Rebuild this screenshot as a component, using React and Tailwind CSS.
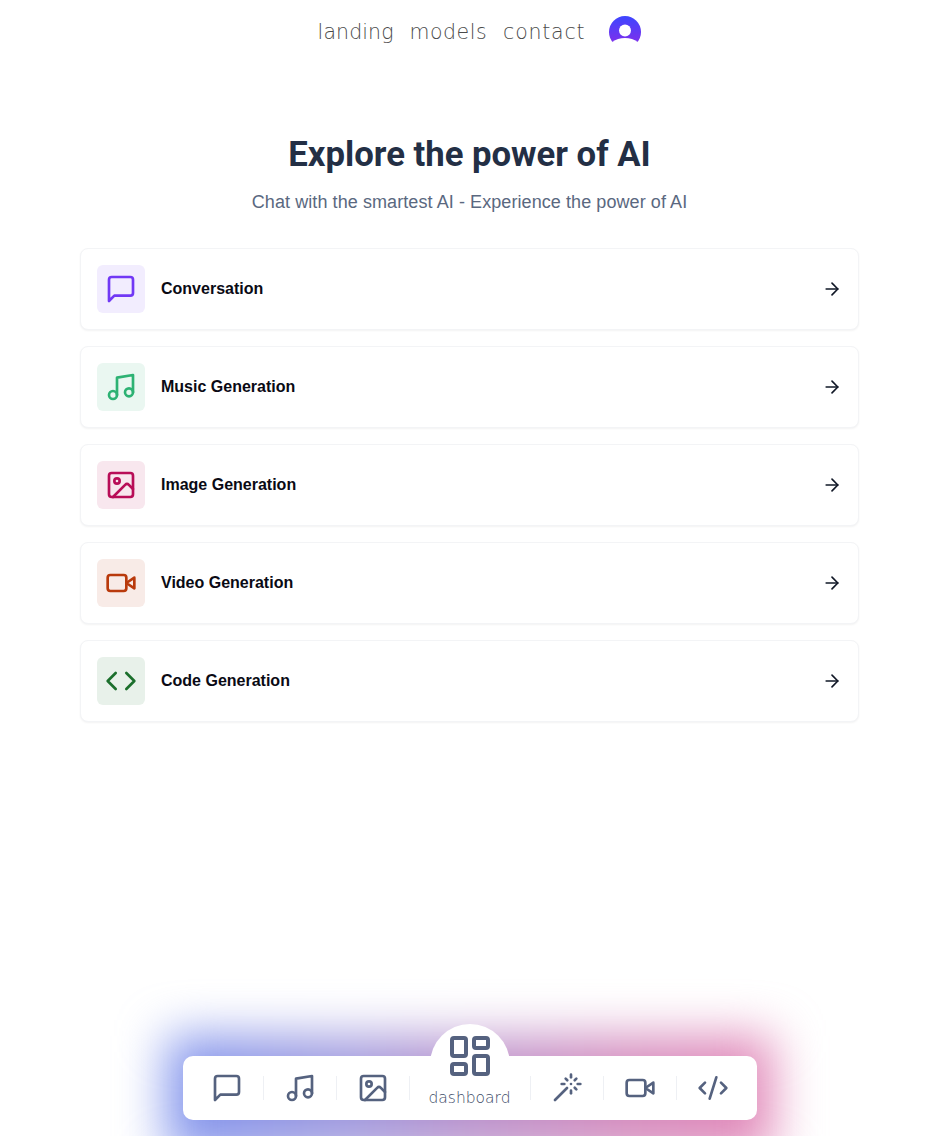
const P = ({ size = 32, sw = 2, className = "", children }) => (
  <svg width={size} height={size} viewBox="0 0 24 24" fill="none" stroke="currentColor" strokeWidth={sw} strokeLinecap="round" strokeLinejoin="round" className={className}>
    {children}
  </svg>
);

const Chat = (p) => <P {...p}><path d="M21 15a2 2 0 0 1-2 2H7l-4 4V5a2 2 0 0 1 2-2h14a2 2 0 0 1 2 2z" /></P>;
const Music = (p) => <P {...p}><path d="M9 18V5l12-2v13" /><circle cx="6" cy="18" r="3" /><circle cx="18" cy="16" r="3" /></P>;
const ImageI = (p) => <P {...p}><rect x="3" y="3" width="18" height="18" rx="2" /><circle cx="9" cy="9" r="2" /><path d="m21 15-3.086-3.086a2 2 0 0 0-2.828 0L6 21" /></P>;
const Video = (p) => <P {...p}><path d="m22 8-6 4 6 4V8Z" /><rect x="2" y="6" width="14" height="12" rx="2" /></P>;
const Code = (p) => <P {...p}><path d="m16 18 6-6-6-6" /><path d="m8 6-6 6 6 6" /></P>;
const CodeSlash = (p) => <P {...p}><path d="m18 16 4-4-4-4" /><path d="m6 8-4 4 4 4" /><path d="m14.5 4-5 16" /></P>;
const Wand = (p) => <P {...p}><path d="M15 4V2" /><path d="M15 16v-2" /><path d="M8 9h2" /><path d="M20 9h2" /><path d="M17.8 11.8 19 13" /><path d="M15 9h0" /><path d="M17.8 6.2 19 5" /><path d="m3 21 9-9" /><path d="M12.2 6.2 11 5" /></P>;
const Dash = (p) => <P {...p}><rect x="3" y="3" width="7" height="9" rx="1" /><rect x="14" y="3" width="7" height="5" rx="1" /><rect x="14" y="12" width="7" height="9" rx="1" /><rect x="3" y="16" width="7" height="5" rx="1" /></P>;

const cards = [
  { label: "Conversation", Icon: Chat, color: "text-[#7138f5]", bg: "bg-[#f2edfe]" },
  { label: "Music Generation", Icon: Music, color: "text-[#2db273]", bg: "bg-[#eaf7f1]" },
  { label: "Image Generation", Icon: ImageI, color: "text-[#b80d57]", bg: "bg-[#f8e7ee]" },
  { label: "Video Generation", Icon: Video, color: "text-[#b93a0c]", bg: "bg-[#f8ebe7]" },
  { label: "Code Generation", Icon: Code, color: "text-[#1b6f2c]", bg: "bg-[#e8f1ea]" },
];

const Divider = () => <div className="h-6 w-px bg-[#eef0f4]" />;
const Slot = ({ Icon }) => (
  <div className="flex w-[72px] items-center justify-center text-[#55627f]">
    <Icon size={32} />
  </div>
);

export default function App() {
  return (
    <div className="relative flex h-[1136px] flex-col overflow-hidden bg-white font-['Liberation_Sans',sans-serif]">
      <nav className="flex h-16 items-center justify-center gap-[16px] pl-5 text-[#4a4a4a]">
        <a className="font-['DejaVu_Sans',sans-serif] text-[20.5px] font-extralight tracking-[0.1px]">landing</a>
        <a className="font-['DejaVu_Sans',sans-serif] text-[20.5px] font-extralight tracking-[0.5px]">models</a>
        <a className="font-['DejaVu_Sans',sans-serif] text-[20.5px] font-extralight tracking-[0.8px]">contact</a>
        <svg width="32" height="32" viewBox="0 0 32 32" className="ml-2">
          <defs>
            <linearGradient id="av" x1="0" y1="0" x2="0" y2="1">
              <stop offset="0" stopColor="#3d46ff" />
              <stop offset="1" stopColor="#8a2be8" />
            </linearGradient>
            <mask id="avm">
              <rect width="32" height="32" fill="#fff" />
              <ellipse cx="16" cy="36" rx="18" ry="14" fill="#000" />
            </mask>
          </defs>
          <circle cx="16" cy="16" r="16" fill="url(#av)" mask="url(#avm)" />
          <circle cx="16" cy="14.5" r="6" fill="#fff" />
        </svg>
      </nav>

      <header className="mt-[65px] text-center">
        <h1 className="font-['Roboto',sans-serif] text-[34.7px] leading-[50px] font-bold text-[#232f45]">Explore the power of AI</h1>
        <p className="mt-[9px] text-lg leading-7 tracking-[0.08px] text-[#5a6880]">Chat with the smartest AI - Experience the power of AI</p>
      </header>

      <main className="mt-8 flex flex-col gap-4 px-20">
        {cards.map(({ label, Icon, color, bg }) => (
          <div key={label} className="flex items-center justify-between rounded-lg border border-[#f3f4f6] bg-white p-4 shadow-[0_1px_2px_rgba(0,0,0,0.05)]">
            <div className="flex items-center gap-4">
              <div className={`flex h-12 w-12 items-center justify-center rounded-md ${bg} ${color}`}>
                <Icon size={32} />
              </div>
              <span className="text-base font-bold text-[#0a0a14]">{label}</span>
            </div>
            <svg width="20" height="20" viewBox="0 0 24 24" fill="none" stroke="#111827" strokeWidth="2" strokeLinecap="round" strokeLinejoin="round">
              <path d="M5 12h14" /><path d="m12 5 7 7-7 7" />
            </svg>
          </div>
        ))}
      </main>

      <div className="absolute top-[1036px] left-[167px] h-[120px] w-[606px] bg-[linear-gradient(90deg,#7f94ee_0%,#a09ade_30%,#b992cc_50%,#d48cbe_75%,#e388b8_100%)] blur-[24px]" />

      <div className="relative mx-auto mt-auto mb-4 flex h-16 w-[574px] items-center rounded-[10px] bg-white px-2">
        <Slot Icon={Chat} /><Divider />
        <Slot Icon={Music} /><Divider />
        <Slot Icon={ImageI} /><Divider />
        <div className="relative flex h-full w-[120px] flex-col items-center justify-end text-[#55627f]">
          <div className="absolute top-[-32px] left-[20px] flex h-20 w-20 justify-center rounded-full bg-white pt-2">
            <Dash size={48} />
          </div>
          <span className="relative mb-[14px] font-['DejaVu_Sans',sans-serif] text-[15.5px] leading-4 font-extralight text-[#404c68]">dashboard</span>
        </div>
        <Divider />
        <Slot Icon={Wand} /><Divider />
        <Slot Icon={Video} /><Divider />
        <Slot Icon={CodeSlash} />
      </div>
    </div>
  );
}
